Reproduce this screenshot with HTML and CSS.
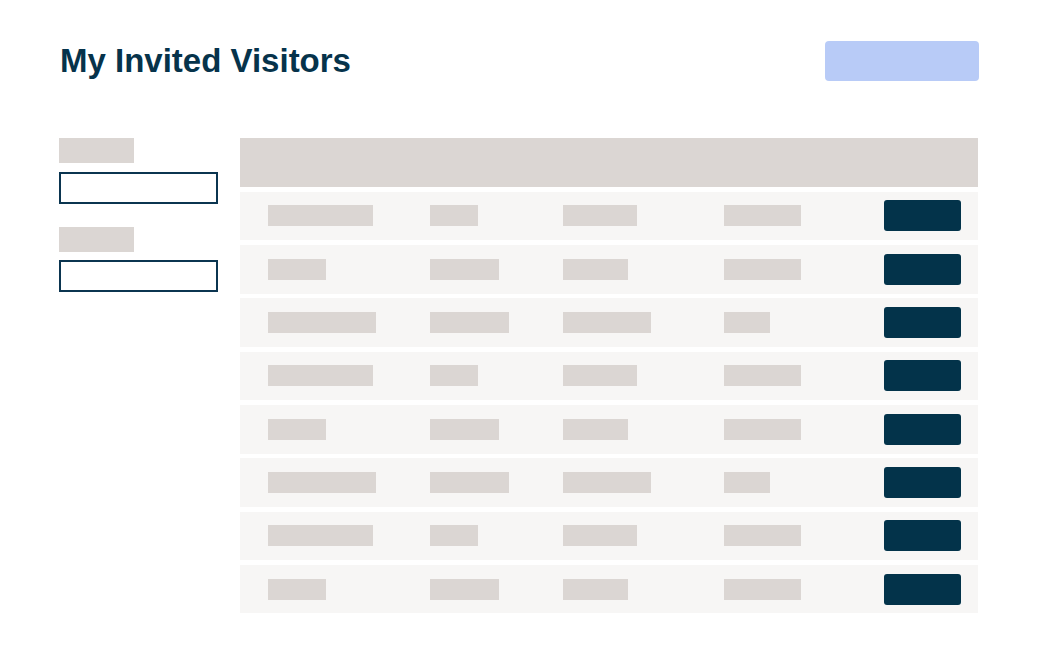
FILE: index.html
```html
<!DOCTYPE html>
<html lang="en">
<head>
<meta charset="utf-8">
<title>My Invited Visitors</title>
<link rel="stylesheet" href="styles.css">
</head>
<body>
<div class="page">
  <header class="top">
    <h1 class="title">My Invited Visitors</h1>
    <div class="primary-btn"></div>
  </header>
  <main class="main">
    <aside class="filters">
      <div class="filter">
        <div class="filter-label"></div>
        <div class="filter-input"></div>
      </div>
      <div class="filter">
        <div class="filter-label"></div>
        <div class="filter-input"></div>
      </div>
    </aside>
    <section class="table">
      <div class="thead"></div>
      <div class="row">
        <div class="cell"><span class="bar" style="width:105px"></span></div>
        <div class="cell"><span class="bar" style="width:48px"></span></div>
        <div class="cell"><span class="bar" style="width:74px"></span></div>
        <div class="cell"><span class="bar" style="width:77px"></span></div>
        <div class="cell"><span class="action"></span></div>
      </div>
      <div class="row">
        <div class="cell"><span class="bar" style="width:58px"></span></div>
        <div class="cell"><span class="bar" style="width:69px"></span></div>
        <div class="cell"><span class="bar" style="width:65px"></span></div>
        <div class="cell"><span class="bar" style="width:77px"></span></div>
        <div class="cell"><span class="action"></span></div>
      </div>
      <div class="row">
        <div class="cell"><span class="bar" style="width:108px"></span></div>
        <div class="cell"><span class="bar" style="width:79px"></span></div>
        <div class="cell"><span class="bar" style="width:88px"></span></div>
        <div class="cell"><span class="bar" style="width:46px"></span></div>
        <div class="cell"><span class="action"></span></div>
      </div>
      <div class="row">
        <div class="cell"><span class="bar" style="width:105px"></span></div>
        <div class="cell"><span class="bar" style="width:48px"></span></div>
        <div class="cell"><span class="bar" style="width:74px"></span></div>
        <div class="cell"><span class="bar" style="width:77px"></span></div>
        <div class="cell"><span class="action"></span></div>
      </div>
      <div class="row">
        <div class="cell"><span class="bar" style="width:58px"></span></div>
        <div class="cell"><span class="bar" style="width:69px"></span></div>
        <div class="cell"><span class="bar" style="width:65px"></span></div>
        <div class="cell"><span class="bar" style="width:77px"></span></div>
        <div class="cell"><span class="action"></span></div>
      </div>
      <div class="row">
        <div class="cell"><span class="bar" style="width:108px"></span></div>
        <div class="cell"><span class="bar" style="width:79px"></span></div>
        <div class="cell"><span class="bar" style="width:88px"></span></div>
        <div class="cell"><span class="bar" style="width:46px"></span></div>
        <div class="cell"><span class="action"></span></div>
      </div>
      <div class="row">
        <div class="cell"><span class="bar" style="width:105px"></span></div>
        <div class="cell"><span class="bar" style="width:48px"></span></div>
        <div class="cell"><span class="bar" style="width:74px"></span></div>
        <div class="cell"><span class="bar" style="width:77px"></span></div>
        <div class="cell"><span class="action"></span></div>
      </div>
      <div class="row">
        <div class="cell"><span class="bar" style="width:58px"></span></div>
        <div class="cell"><span class="bar" style="width:69px"></span></div>
        <div class="cell"><span class="bar" style="width:65px"></span></div>
        <div class="cell"><span class="bar" style="width:77px"></span></div>
        <div class="cell"><span class="action"></span></div>
      </div>
    </section>
  </main>
</div>
</body>
</html>
```

FILE: styles.css
```css
html, body {
  margin: 0;
  padding: 0;
  background: #ffffff;
}

body {
  font-family: "Liberation Sans", Arial, sans-serif;
}

.page {
  width: 1040px;
  box-sizing: border-box;
  padding: 41px 61px 0 59px;
}

.top {
  display: flex;
  align-items: center;
  justify-content: space-between;
  height: 40px;
}

.title {
  margin: 0 0 0 1px;
  font-size: 33px;
  font-weight: 700;
  color: #06334b;
  line-height: 38px;
  letter-spacing: 0;
}

.primary-btn {
  width: 154px;
  height: 40px;
  border-radius: 4px;
  background: #b8cbf7;
}

.main {
  display: flex;
  gap: 22px;
  margin-top: 57.33px;
}

.filters {
  width: 159px;
  flex: none;
  display: flex;
  flex-direction: column;
  gap: 23px;
}

.filter {
  display: flex;
  flex-direction: column;
  gap: 8.5px;
}

.filter-label {
  width: 75px;
  height: 25px;
  background: #dbd6d3;
}

.filter-input {
  height: 32px;
  box-sizing: border-box;
  border: 2px solid #0b3550;
  background: #ffffff;
}

.table {
  width: 738px;
  flex: none;
  display: flex;
  flex-direction: column;
  gap: 4.67px;
}

.thead {
  height: 48.67px;
  background: #dbd6d3;
}

.row {
  height: 48.67px;
  background: #f7f6f5;
  display: grid;
  grid-template-columns: 162px 133px 161px 160px 77px;
  align-items: center;
  padding-left: 28px;
}

.cell {
  display: flex;
  align-items: center;
}

.bar {
  display: block;
  height: 21px;
  background: #dbd6d3;
}

.action {
  display: block;
  width: 77px;
  height: 31px;
  border-radius: 3px;
  background: #03334a;
}
```
